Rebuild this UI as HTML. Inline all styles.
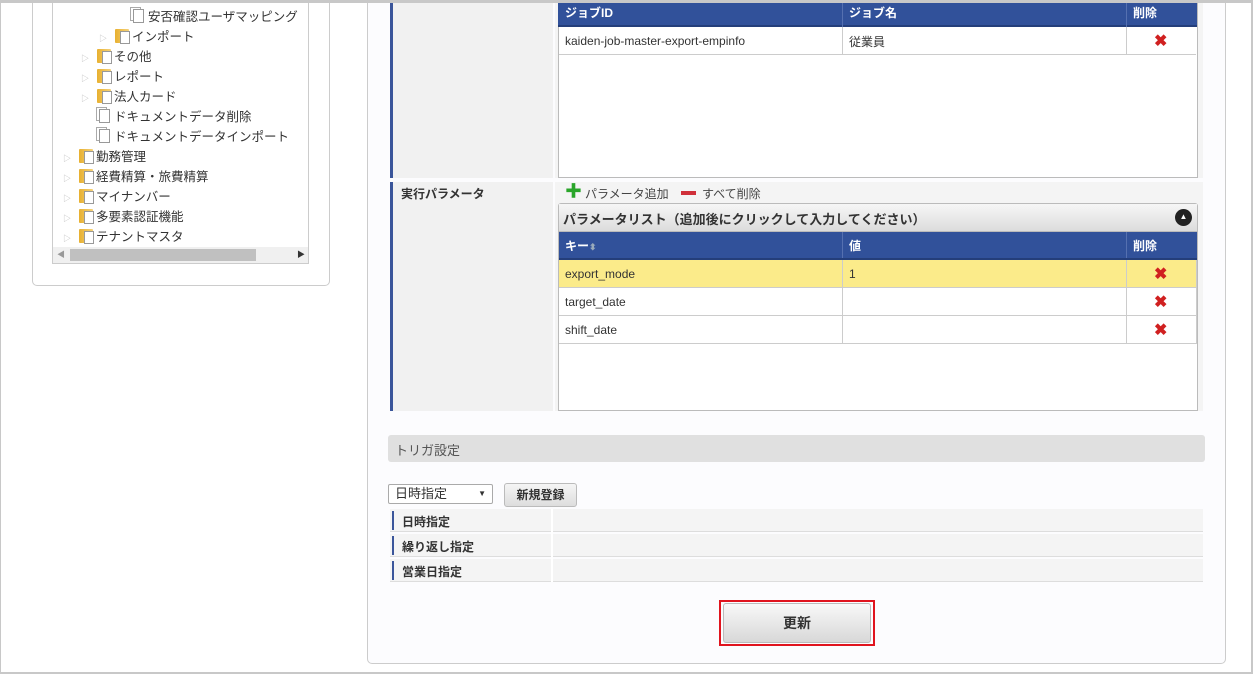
<!DOCTYPE html>
<html><head><meta charset="utf-8"><style>
*{box-sizing:border-box;margin:0;padding:0}
body{width:1253px;height:674px;overflow:hidden;background:#fff;font-family:"Liberation Sans","Noto Sans CJK JP",sans-serif;font-size:12px;color:#333;position:relative}
.a{position:absolute}
.frame{left:0;top:0;width:1253px;height:674px;border:2px solid #c8c8c8;border-left:1px solid #c8c8c8;border-top:3px solid #c8c8c8;z-index:10;pointer-events:none}
.tree div{position:absolute;height:20px;line-height:20px;font-size:12.5px;white-space:nowrap}
.fold{display:inline-block;width:14px;height:14px;vertical-align:-2px;margin-right:3px;background:linear-gradient(90deg,#e8b030,#f5d27a);border-radius:1px;position:relative}
.fold:after{content:"";position:absolute;left:5px;top:2px;width:8px;height:11px;background:#fff;border:1px solid #999}
.doc{display:inline-block;width:11px;height:14px;border:1px solid #999;vertical-align:-2px;margin-right:4px;background:#fff;box-shadow:-3px -2px 0 -1px #fff,-3px -2px 0 0 #aaa}
.tri{color:#bbb;font-size:8px;margin-right:8px}
.hd{background:#31519a;color:#fff;font-weight:bold;font-size:12px;line-height:24px;border-bottom:2px solid #243e7a}
.x{color:#d02020;font-weight:bold;font-size:16px}
</style></head><body>
<div class="a frame"></div>
<div class="a" style="left:32px;top:-5px;width:298px;height:291px;border:1px solid #ccc;border-radius:5px;background:#fff"></div>
<div class="a" style="left:52px;top:-5px;width:257px;height:269px;border:1px solid #ccc;background:#fff"></div>
<div class="a tree" style="left:0;top:0">
<div style="left:133px;top:-13px"><span class="doc"></span>　</div>
<div style="left:133px;top:7px"><span class="doc"></span>安否確認ユーザマッピング</div>
<div style="left:99px;top:27px"><span class="tri">▷</span><span class="fold"></span>インポート</div>
<div style="left:81px;top:47px"><span class="tri">▷</span><span class="fold"></span>その他</div>
<div style="left:81px;top:67px"><span class="tri">▷</span><span class="fold"></span>レポート</div>
<div style="left:81px;top:87px"><span class="tri">▷</span><span class="fold"></span>法人カード</div>
<div style="left:99px;top:107px"><span class="doc"></span>ドキュメントデータ削除</div>
<div style="left:99px;top:127px"><span class="doc"></span>ドキュメントデータインポート</div>
<div style="left:63px;top:147px"><span class="tri">▷</span><span class="fold"></span>勤務管理</div>
<div style="left:63px;top:167px"><span class="tri">▷</span><span class="fold"></span>経費精算・旅費精算</div>
<div style="left:63px;top:187px"><span class="tri">▷</span><span class="fold"></span>マイナンバー</div>
<div style="left:63px;top:207px"><span class="tri">▷</span><span class="fold"></span>多要素認証機能</div>
<div style="left:63px;top:227px"><span class="tri">▷</span><span class="fold"></span>テナントマスタ</div>
</div>
<div class="a" style="left:53px;top:247px;width:255px;height:16px;background:#f0f0f0"></div>
<div class="a" style="left:70px;top:249px;width:186px;height:12px;background:#c0c0c0"></div>
<div class="a" style="left:57px;top:249px;font-size:8px;color:#999">◀</div>
<div class="a" style="left:297px;top:249px;font-size:8px;color:#333">▶</div>
<div class="a" style="left:367px;top:-5px;width:859px;height:669px;border:1px solid #ccc;border-radius:5px;background:#fcfcfe"></div>
<div class="a" style="left:390px;top:0;width:163px;height:178px;background:#f1f1f1;border-left:3px solid #3a559a"></div>
<div class="a" style="left:555px;top:0;width:648px;height:178px;background:#f4f4f4"></div>
<div class="a" style="left:390px;top:182px;width:163px;height:229px;background:#f1f1f1;border-left:3px solid #3a559a"></div>
<div class="a" style="left:555px;top:182px;width:648px;height:229px;background:#f4f4f4"></div>
<div class="a" style="left:401px;top:185px;font-weight:bold;font-size:12px">実行パラメータ</div>
<div class="a" style="left:558px;top:0;width:640px;height:178px;background:#fff;border:1px solid #bbb;border-top:0"></div>
<div class="a hd" style="left:558px;top:0;width:639px;height:27px"></div>
<div class="a" style="left:565px;top:4px;color:#fff;font-weight:bold">ジョブID</div>
<div class="a" style="left:849px;top:4px;color:#fff;font-weight:bold">ジョブ名</div>
<div class="a" style="left:1133px;top:4px;color:#fff;font-weight:bold">削除</div>
<div class="a" style="left:842px;top:2px;width:1px;height:25px;background:#5570b0"></div>
<div class="a" style="left:1126px;top:2px;width:1px;height:25px;background:#5570b0"></div>
<div class="a" style="left:559px;top:27px;width:637px;height:28px;border-bottom:1px solid #ccc"></div>
<div class="a" style="left:842px;top:27px;width:1px;height:28px;background:#ccc"></div>
<div class="a" style="left:1126px;top:27px;width:1px;height:28px;background:#ccc"></div>
<div class="a" style="left:565px;top:34px">kaiden-job-master-export-empinfo</div>
<div class="a" style="left:849px;top:33px">従業員</div>
<div class="a x" style="left:1154px;top:31px">✖</div>
<div class="a" style="left:565px;top:184px;color:#2aa52a;font-size:17px;font-weight:bold;line-height:16px">✚</div>
<div class="a" style="left:585px;top:185px;color:#444">パラメータ追加</div>
<div class="a" style="left:681px;top:191px;width:15px;height:4px;background:#d0303a"></div>
<div class="a" style="left:702px;top:185px;color:#444">すべて削除</div>
<div class="a" style="left:558px;top:203px;width:640px;height:208px;background:#fff;border:1px solid #bbb;border-radius:3px 3px 0 0"></div>
<div class="a" style="left:559px;top:204px;width:638px;height:28px;background:linear-gradient(#f6f6f6,#dcdcdc);border-bottom:1px solid #bbb"></div>
<div class="a" style="left:563px;top:209px;font-weight:bold;font-size:13px">パラメータリスト（追加後にクリックして入力してください）</div>
<div class="a" style="left:1175px;top:209px;width:17px;height:17px;border-radius:50%;background:#222;color:#fff;font-size:8px;text-align:center;line-height:16px">▲</div>
<div class="a hd" style="left:559px;top:232px;width:638px;height:28px"></div>
<div class="a" style="left:565px;top:237px;color:#fff;font-weight:bold">キー<span style="color:#9ab;font-size:9px">⬍</span></div>
<div class="a" style="left:849px;top:237px;color:#fff;font-weight:bold">値</div>
<div class="a" style="left:1133px;top:237px;color:#fff;font-weight:bold">削除</div>
<div class="a" style="left:842px;top:232px;width:1px;height:26px;background:#5570b0"></div>
<div class="a" style="left:1126px;top:232px;width:1px;height:26px;background:#5570b0"></div>
<div class="a" style="left:559px;top:260px;width:637px;height:28px;background:#fbeb8a;border-bottom:1px solid #ccc"></div>
<div class="a" style="left:559px;top:288px;width:637px;height:28px;border-bottom:1px solid #ccc"></div>
<div class="a" style="left:559px;top:316px;width:637px;height:28px;border-bottom:1px solid #ccc"></div>
<div class="a" style="left:842px;top:260px;width:1px;height:84px;background:#ccc"></div>
<div class="a" style="left:1126px;top:260px;width:1px;height:84px;background:#ccc"></div>
<div class="a" style="left:1196px;top:260px;width:1px;height:84px;background:#ccc"></div>
<div class="a" style="left:565px;top:267px">export_mode</div>
<div class="a" style="left:849px;top:267px">1</div>
<div class="a" style="left:565px;top:295px">target_date</div>
<div class="a" style="left:565px;top:323px">shift_date</div>
<div class="a x" style="left:1154px;top:264px">✖</div>
<div class="a x" style="left:1154px;top:292px">✖</div>
<div class="a x" style="left:1154px;top:320px">✖</div>
<div class="a" style="left:388px;top:435px;width:817px;height:27px;background:#e0e0e0;border-radius:3px"></div>
<div class="a" style="left:395px;top:440px;font-size:13px;color:#555">トリガ設定</div>
<div class="a" style="left:388px;top:484px;width:105px;height:20px;border:1px solid #aaa;border-radius:2px;background:#fff;padding-left:6px;line-height:18px;font-size:13px">日時指定<span style="position:absolute;right:6px;font-size:8px">▼</span></div>
<div class="a" style="left:504px;top:483px;width:73px;height:24px;border:1px solid #bbb;border-radius:3px;background:linear-gradient(#f5f5f5,#ddd);text-align:center;line-height:22px;font-weight:bold">新規登録</div>
<div class="a" style="left:390px;top:509px;width:813px;height:23px;background:#f4f4f4;border-bottom:1px solid #ddd"></div>
<div class="a" style="left:390px;top:534px;width:813px;height:23px;background:#f4f4f4;border-bottom:1px solid #ddd"></div>
<div class="a" style="left:390px;top:559px;width:813px;height:23px;background:#f4f4f4;border-bottom:1px solid #ddd"></div>
<div class="a" style="left:551px;top:509px;width:2px;height:73px;background:#fff"></div>
<div class="a" style="left:392px;top:511px;width:2px;height:19px;background:#3a559a"></div>
<div class="a" style="left:392px;top:536px;width:2px;height:19px;background:#3a559a"></div>
<div class="a" style="left:392px;top:561px;width:2px;height:19px;background:#3a559a"></div>
<div class="a" style="left:402px;top:513px;font-weight:bold">日時指定</div>
<div class="a" style="left:402px;top:538px;font-weight:bold">繰り返し指定</div>
<div class="a" style="left:402px;top:563px;font-weight:bold">営業日指定</div>
<div class="a" style="left:719px;top:600px;width:156px;height:46px;border:2px solid #e0141e"></div>
<div class="a" style="left:723px;top:603px;width:148px;height:40px;border:1px solid #bbb;border-radius:3px;background:linear-gradient(#f8f8f8,#d8d8d8);text-align:center;line-height:38px;font-weight:bold;font-size:14px">更新</div>
</body></html>
